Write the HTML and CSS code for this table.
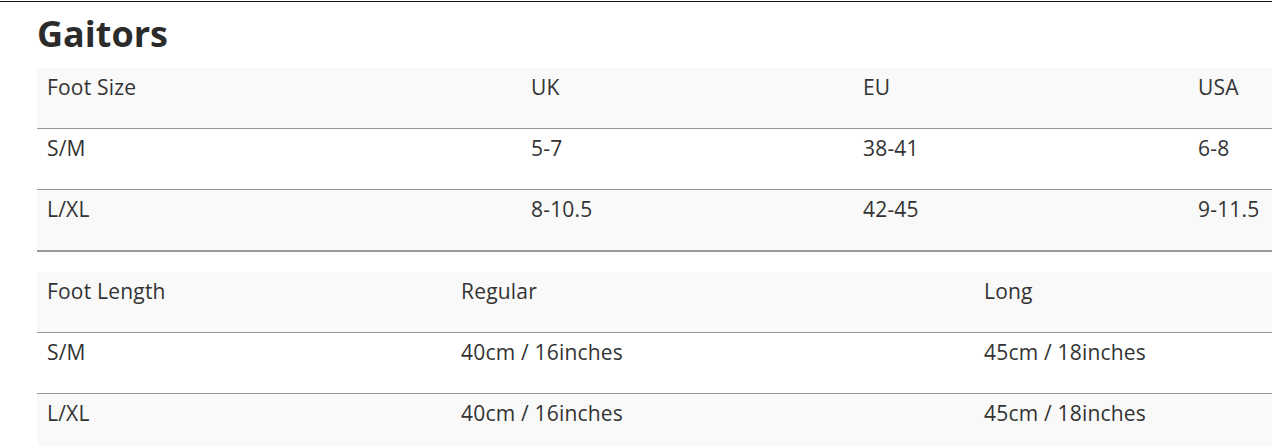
FILE: index.html
```html
<!DOCTYPE html>
<html>
<head>
<meta charset="utf-8">
<link rel="stylesheet" href="styles.css">
</head>
<body>
<div class="topline"></div>
<main class="content">
  <h2 class="title">Gaitors</h2>
  <table class="size-table t1">
    <colgroup><col class="c1"><col class="c2"><col class="c3"><col class="c4"></colgroup>
    <tr class="head"><td>Foot Size</td><td>UK</td><td>EU</td><td>USA</td></tr>
    <tr><td>S/M</td><td>5-7</td><td>38-41</td><td>6-8</td></tr>
    <tr class="alt last"><td>L/XL</td><td>8-10.5</td><td>42-45</td><td>9-11.5</td></tr>
  </table>
  <table class="size-table t2">
    <colgroup><col class="d1"><col class="d2"><col class="d3"></colgroup>
    <tr class="head"><td>Foot Length</td><td>Regular</td><td>Long</td></tr>
    <tr><td>S/M</td><td>40cm / 16inches</td><td>45cm / 18inches</td></tr>
    <tr class="alt"><td>L/XL</td><td>40cm / 16inches</td><td>45cm / 18inches</td></tr>
  </table>
</main>
</body>
</html>
```
FILE: styles.css
```css
html, body {
  margin: 0;
  padding: 0;
  background: #fff;
  overflow: hidden;
}
body {
  font-family: "Open Sans", "Liberation Sans", sans-serif;
  color: #333;
}
.topline {
  margin-top: 1px;
  height: 1px;
  background: #111;
}
.content {
  padding-left: 37px;
}
.title {
  margin: 0;
  padding-top: 9px;
  height: 53px;
  box-sizing: border-box;
  font-size: 36px;
  line-height: 46px;
  font-weight: 700;
  color: #2b2b2b;
}
.size-table {
  border-collapse: collapse;
  table-layout: fixed;
  width: 1235px;
}
.size-table td {
  height: 61px;
  box-sizing: border-box;
  padding: 5px 10px 0;
  vertical-align: top;
  font-size: 21px;
  line-height: 28px;
  letter-spacing: 0.2px;
  color: #333;
  white-space: nowrap;
}
.size-table .head td { height: 60px; }
.size-table .last td { height: 62px; }
.size-table tr { border-bottom: 1px solid #999; }
.size-table tr:last-child { border-bottom: 2px solid #999; }
.size-table .head, .size-table .alt { background: #f9f9f9; }
.t1 { margin-top: 13px; }
.t2 { margin-top: 20px; }
.t2 tr:last-child { border-bottom: none; }
.c1 { width: 484px; }
.c2 { width: 332px; }
.c3 { width: 335px; }
.c4 { width: 84px; }
.d1 { width: 414px; }
.d2 { width: 523px; }
.d3 { width: 298px; }
```
